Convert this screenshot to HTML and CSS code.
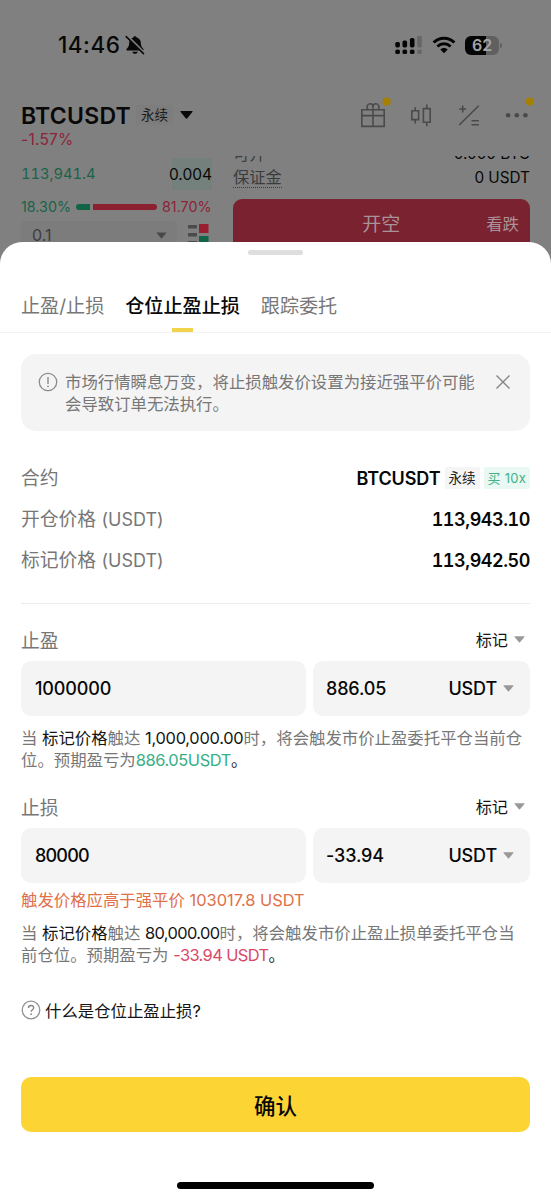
FILE: index.html
```html
<!DOCTYPE html>
<html lang="zh-CN">
<head>
<meta charset="utf-8">
<title>仓位止盈止损</title>
<link rel="stylesheet" href="styles.css">
</head>
<body>
<div class="phone">
  <div class="status">
    <span class="clock">14:46</span>
    <svg class="bell" width="20" height="20" viewBox="0 0 20 20"><path d="M10 1.2c-.9 0-1.6.6-1.7 1.4C5.900 3.300 4.200 5.300 4.200 7.600c0 3.600-1.100 5-2.600 6.300-.5.5-.4 1.500.5 1.500h15.800c.9 0 1-1 .5-1.500-1.500-1.300-2.600-2.700-2.600-6.300 0-2.300-1.700-4.300-4.100-5C11.600 1.800 10.900 1.200 10 1.200zM7.300 16.700h5.400c-.3 1.300-1.300 2.100-2.700 2.100s-2.400-.8-2.700-2.100z" fill="#080808"/><path d="M2.200 1l17.500 17.500" stroke="#808080" stroke-width="2.600"/><path d="M1.200 1.600l17.300 17" stroke="#080808" stroke-width="1.500" stroke-linecap="round"/></svg>
    <svg class="signal" width="28" height="20" viewBox="0 0 28 20"><g fill="#050505"><rect x=".3" y="7" width="4.600" height="5.400" rx="1.600"/><rect x="7.500" y="5.500" width="4.600" height="6.900" rx="1.600"/><rect x="14.900" y="3" width="4.600" height="9.400" rx="1.600"/><rect x=".3" y="14.500" width="4.600" height="4.600" rx="1.600"/><rect x="7.500" y="14.500" width="4.600" height="4.600" rx="1.600"/><rect x="14.900" y="14.500" width="4.600" height="4.600" rx="1.600"/></g><g fill="#666"><rect x="22.200" y="1" width="4.600" height="11.400" rx="1.300"/><rect x="22.200" y="14.500" width="4.600" height="4.600" rx="1.600"/></g></svg>
    <svg class="wifi" width="24" height="18" viewBox="0 0 24 18"><g fill="none" stroke="#050505" stroke-width="2.900"><path d="M1.600 6.600C7.300.8 16.700.8 22.400 6.600"/><path d="M5.400 10.500c3.700-3.600 9.500-3.600 13.200 0"/></g><path d="M12 17.300l-3.700-3.700c2-2 5.400-2 7.400 0z" fill="#050505"/></svg>
    <span class="battery">62</span><i class="battery-tip"></i>
  </div>
  <div class="pair">
    <strong class="symbol">BTCUSDT</strong><span class="kind">永续</span>
    <svg class="pick" width="13" height="8" viewBox="0 0 13 8"><path d="M1 0h11q1 0 .4.900L7.300 7.200q-.8.900-1.600 0L.6.900Q0 0 1 0z" fill="#080808"/></svg>
    <svg class="tools" width="175" height="36" viewBox="0 0 175 36"><g fill="none" stroke="#4a4a4a" stroke-width="1.600"><path d="M2.800 12.800h22.400v16.600H2.800zM2.800 18.600h22.400M14 12.800v16.600"/><path d="M14 12.800V9.500c0-1.700-1-2.800-2.700-2.800-3.200 0-4.200 3.300-2.300 6.100M14 9.500c0-1.700 1-2.800 2.700-2.800 3.200 0 4.200 3.300 2.300 6.100"/><path d="M52.800 13.800h6.800v8.800h-6.800zM56.200 10.300v3.500M56.200 22.600v4M64.400 11.600h6.800v13.600h-6.800zM67.800 7.600v4M67.800 25.200v4"/><path d="M100.200 28l19.500-19.300M100.200 12h7M103.700 8.500v7M112.500 23.800h7.400M112.500 27.700h7.400"/></g><g fill="#4a4a4a"><circle cx="149.100" cy="18.300" r="2.300"/><circle cx="157.800" cy="18.300" r="2.300"/><circle cx="166.400" cy="18.300" r="2.300"/></g><g fill="#a58000"><circle cx="27.600" cy="4.700" r="4.100"/><circle cx="170.800" cy="4.600" r="4.100"/></g></svg>
  </div>
  <div class="change">-1.57%</div>
  <div class="market">
    <div class="book">
      <div class="last"><span class="price">113,941.4</span><span class="amount">0.004</span></div>
      <div class="ratio"><span class="up">18.30%</span><i class="bar-up"></i><i class="bar-down"></i><span class="down">81.70%</span></div>
      <div class="depth"><div class="step"><span>0.1</span><svg width="11" height="7" viewBox="0 0 11 7"><path d="M.3.500h10.400L5.500 6.800z" fill="#484848"/></svg></div>
      <svg width="21" height="24" viewBox="0 0 21 24"><path d="M0 1h9v3.500H0zM0 9h9v3.500H0zM0 17h9v3.500H0z" fill="#4b4b4b"/><path d="M11 0h9.500v9H11z" fill="#981f31"/><path d="M11 12h9.500v9H11z" fill="#126447"/></svg></div>
    </div>
    <div class="order">
      <div class="line clipped"><span>可开</span><b>0.000 BTC</b></div>
      <div class="line"><span class="margin">保证金</span><b>0 USDT</b></div>
      <div class="short"><span class="short-main">开空</span><span class="short-side">看跌</span></div>
    </div>
  </div>

  <section class="sheet">
    <div class="handle"></div>
    <nav class="tabs"><span>止盈/止损</span><span class="active">仓位止盈止损</span><span>跟踪委托</span></nav>
    <div class="body">
      <div class="notice">
        <svg class="info" width="20" height="20" viewBox="0 0 20 20"><circle cx="10" cy="10" r="8.700" fill="none" stroke="#8c8c8c" stroke-width="1.300"/><path d="M10 5v7" stroke="#8c8c8c" stroke-width="1.400"/><circle cx="10" cy="14.300" r=".9" fill="#8c8c8c"/></svg>
        <p>市场行情瞬息万变，将止损触发价设置为接近强平价可能<br>会导致订单无法执行。</p>
        <svg class="close" width="16" height="16" viewBox="0 0 16 16"><path d="M1.500 1.500l13 13M14.500 1.500l-13 13" stroke="#858585" stroke-width="1.400"/></svg>
      </div>
      <div class="facts">
        <div class="fact"><span class="label">合约</span><div class="contract"><strong>BTCUSDT</strong><span class="tag">永续</span><span class="tag buy">买 10x</span></div></div>
        <div class="fact"><span class="label">开仓价格 <em>(USDT)</em></span><strong class="num">113,943.10</strong></div>
        <div class="fact"><span class="label">标记价格 <em>(USDT)</em></span><strong class="num">113,942.50</strong></div>
      </div>
      <div class="group">
        <div class="head"><span>止盈</span><span class="mark">标记<svg width="11" height="7" viewBox="0 0 11 7"><path d="M.8.300h9.400q.6.100.2.600L6 6.300q-.5.500-1 0L.6.900Q.2.400.8.300z" fill="#999"/></svg></span></div>
        <div class="inputs"><div class="field">1000000</div><div class="field pnl"><span>886.05</span><span class="unit">USDT<svg width="11" height="7" viewBox="0 0 11 7"><path d="M.8.300h9.400q.6.100.2.600L6 6.300q-.5.500-1 0L.6.900Q.2.400.8.300z" fill="#999"/></svg></span></div></div>
        <p class="help">当 <b>标记价格</b>触达 <b class="target">1,000,000.00</b>时，将会触发市价止盈委托平仓当前仓<br>位。预期盈亏为<i class="gain">886.05USDT</i><b>。</b></p>
      </div>
      <div class="group">
        <div class="head"><span>止损</span><span class="mark">标记<svg width="11" height="7" viewBox="0 0 11 7"><path d="M.8.300h9.400q.6.100.2.600L6 6.300q-.5.500-1 0L.6.900Q.2.400.8.300z" fill="#999"/></svg></span></div>
        <div class="inputs"><div class="field stop">80000</div><div class="field pnl"><span>-33.94</span><span class="unit">USDT<svg width="11" height="7" viewBox="0 0 11 7"><path d="M.8.300h9.400q.6.100.2.600L6 6.300q-.5.500-1 0L.6.900Q.2.400.8.300z" fill="#999"/></svg></span></div></div>
        <p class="error">触发价格应高于强平价 <i>103017.8 USDT</i></p>
        <p class="help">当 <b>标记价格</b>触达 <b class="target low">80,000.00</b>时，将会触发市价止盈止损单委托平仓当<br>前仓位。预期盈亏为 <i class="loss">-33.94 USDT</i><b>。</b></p>
      </div>
      <div class="faq"><svg width="20" height="20" viewBox="0 0 20 20"><circle cx="10" cy="10" r="8.800" fill="none" stroke="#929292" stroke-width="1.300"/><path d="M7.500 8.100c0-3.400 5.200-3.300 5.200-.3 0 1.900-2.600 2-2.600 4" fill="none" stroke="#868686" stroke-width="1.400"/><circle cx="10.100" cy="14.200" r=".9" fill="#868686"/></svg><span>什么是仓位止盈止损?</span></div>
      <button class="confirm">确认</button>
    </div>
    <div class="home"></div>
  </section>
</div>
</body>
</html>
```
FILE: styles.css
```css
* { box-sizing: border-box; }
body { margin: 0; font-family: Inter, "Noto Sans CJK SC", sans-serif; color: #080808; }
p { margin: 0; }
em, i { font-style: normal; }
svg { display: block; flex: none; }
.phone { position: relative; width: 551px; height: 1200px; overflow: hidden; background: #808080; white-space: nowrap; }

.status { display: flex; align-items: center; height: 90px; padding-left: 58px; }
.clock { width: 66px; padding-bottom: 1px; font-size: 22.500px; font-weight: 500; letter-spacing: .5px; }
.bell { margin-left: 1px; }
.signal { margin-left: 250px; }
.wifi { margin-left: 9px; }
.battery { width: 34px; height: 19px; margin-left: 9px; border-radius: 6px; background: linear-gradient(90deg, #050505 63%, #606060 63%); color: #a5a5a5; font-size: 16px; line-height: 19px; font-weight: 600; text-align: center; }
.battery-tip { width: 2px; height: 5px; margin-left: 1px; border-radius: 0 2px 2px 0; background: #606060; }

.pair { display: flex; align-items: center; height: 38px; margin-top: 6px; padding-left: 21px; }
.symbol { width: 115px; padding-top: 1px; font-size: 23px; font-weight: 600; letter-spacing: .25px; }
.kind { width: 37px; height: 20px; padding-left: 5px; background: #7d7d7d; font-size: 13.500px; line-height: 20px; color: #1c1c1c; }
.pick { margin-left: 7px; }
.tools { margin-left: 166px; }
.change { height: 22px; margin-top: -6px; padding: 1px 0 0 21px; color: #8c2438; font-size: 15.500px; letter-spacing: .25px; line-height: 22px; }
.market { display: flex; gap: 21px; margin-top: 6px; padding-left: 21px; }
.book { width: 191px; font-size: 15.500px; }
.last { display: flex; justify-content: space-between; align-items: center; height: 35px; padding-top: 1px; }
.price { color: #1b6349; font-variant-numeric: tabular-nums; font-size: 14.700px; }
.amount { width: 40px; height: 32px; background: #73807b; display: flex; justify-content: flex-end; align-items: center; }
.ratio { display: flex; align-items: center; height: 30px; padding-top: 1px; font-size: 14.300px; }
.up { width: 55px; color: #1b6349; }
.down { margin-left: 5px; color: #8c2438; }
.bar-up { width: 14px; height: 6px; margin-right: 3px; border-radius: 3px 0 0 3px; background: #126447; }
.bar-down { width: 64px; height: 6px; border-radius: 0 3px 3px 0; background: #8c2030; }
.depth { display: flex; gap: 11px; }
.step { display: flex; justify-content: space-between; align-items: center; width: 156px; height: 28px; padding: 0 10px 0 11px; border-radius: 4px; background: #7c7c7c; color: #3c3c3c; font-size: 16px; }
.depth > svg { margin-top: 3px; }
.order { width: 297px; }
.line { display: flex; justify-content: space-between; align-items: center; height: 30px; font-size: 16.300px; color: #3c3c3c; }
.line b { font-size: 15.300px; font-weight: 400; color: #080808; }
.clipped { align-items: flex-end; height: 6px; overflow: hidden; line-height: 16px; }
.margin { border-bottom: 1px dotted #3c3c3c; line-height: 20px; }
.short { display: flex; align-items: center; justify-content: flex-end; height: 47px; margin-top: 7px; padding-right: 11px; border-radius: 9px 9px 0 0; background: #7b2230; color: #a99398; }
.short-main { margin-right: 86px; font-size: 19px; }
.short-side { font-size: 16.400px; }

.sheet { position: absolute; left: 0; right: 0; top: 242px; height: 958px; border-radius: 22px 22px 0 0; background: #fff; }
.handle { width: 55px; height: 5px; margin: 8px auto 0; border-radius: 3px; background: #dedede; }
.tabs { display: flex; gap: 21px; height: 78px; padding-left: 21px; border-bottom: 1px solid #f2f2f2; color: #777; font-size: 19.100px; line-height: 103px; }
.tabs span { position: relative; }
.tabs .active { color: #080808; font-weight: 500; }
.active::after { content: ""; position: absolute; left: 47px; bottom: 0; width: 21px; height: 4px; background: #f2d34b; }
.body { padding: 21px 21px 0; }
.notice { display: flex; height: 77px; padding: 17px 20px 0 17px; border-radius: 15px; background: #f4f4f4; color: #777; font-size: 16.400px; line-height: 22px; }
.notice p { width: 411px; margin-left: 7px; }
.info { margin-top: 1px; }
.notice .close { margin: 3px 0 0 20px; }
.facts { height: 173px; padding-top: 26px; border-bottom: 1px solid #ececec; }
.fact { display: flex; align-items: center; justify-content: space-between; height: 41px; color: #777; font-size: 18.800px; }
.label { padding-bottom: 2px; }
.fact em { font-size: 18px; }
.fact strong { padding-top: 1px; color: #080808; font-size: 18px; font-weight: 600; }
.fact .num { font-variant-numeric: tabular-nums; letter-spacing: -.45px; }
.contract { display: flex; align-items: center; }
.contract strong { letter-spacing: -.1px; }
.tag { height: 22px; margin-left: 4px; padding: 0 4px; border-radius: 2px; background: #f5f5f5; color: #222; font-size: 13.500px; line-height: 22px; }
.tag.buy { background: #e9f8f2; color: #40b28b; font-size: 13px; letter-spacing: .25px; }
.head { display: flex; align-items: center; justify-content: space-between; height: 34px; color: #777; font-size: 18.800px; }
.group { padding-top: 18px; }
.group + .group { padding-top: 18px; }
.mark { display: flex; align-items: center; gap: 6px; margin-right: 5px; color: #151515; font-size: 16.200px; }
.inputs { display: flex; gap: 7px; margin-top: 5px; }
.field { display: flex; align-items: center; width: 285px; height: 55px; padding-left: 14px; border-radius: 10px; background: #f4f4f4; font-size: 18px; font-weight: 500; letter-spacing: -.15px; }
.stop { letter-spacing: -.8px; }
.pnl { justify-content: space-between; width: 217px; padding: 0 16px 0 13px; }
.unit { display: flex; align-items: center; gap: 6px; }
.help, .error { font-size: 16.400px; line-height: 21.500px; }
.help { margin-top: 12px; color: #777; }
.help b { color: #151515; font-weight: 400; }
.help .target { letter-spacing: -.25px; }
.help .low { letter-spacing: -.6px; }
.gain { color: #36af87; letter-spacing: -.4px; }
.loss { color: #d94a66; letter-spacing: -.6px; }
.error { margin-top: 6px; color: #df7048; line-height: 22px; }
.error i { letter-spacing: 0; }
.faq { display: flex; align-items: center; gap: 4px; height: 24px; margin-top: 32px; font-size: 16.400px; color: #151515; }
.confirm { display: block; width: 100%; height: 55px; margin-top: 55px; padding: 0; border: 0; border-radius: 10px; background: #fcd535; color: #080808; font: 500 21.500px Inter, "Noto Sans CJK SC", sans-serif; }
.home { width: 197px; height: 7px; margin: 50px auto 0; border-radius: 4px; background: #000; }
```
